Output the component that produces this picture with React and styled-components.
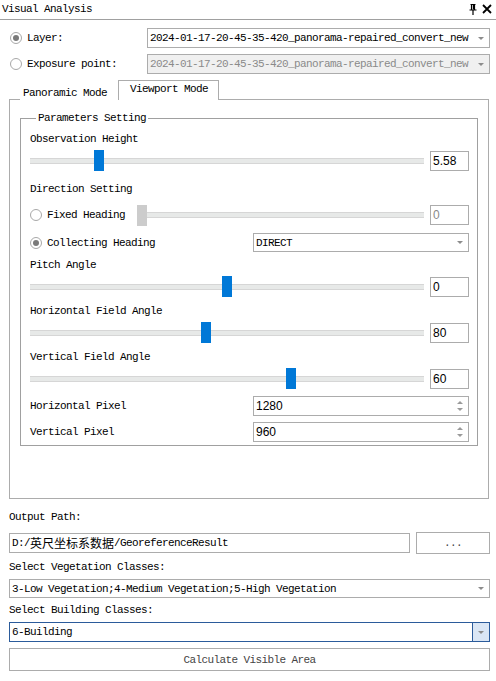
import styled, { createGlobalStyle } from 'styled-components';

const GlobalStyle = createGlobalStyle`
  html, body {
    margin: 0;
    padding: 0;
    background: #ffffff;
  }
  body {
    font-family: "Liberation Mono", "Noto Sans CJK SC", monospace;
    font-size: 11px;
    letter-spacing: -0.6px;
    color: #000;
  }
  * {
    box-sizing: border-box;
  }
`;

const Page = styled.div`
  width: 496px;
  height: 681px;
  overflow: hidden;
`;

const TitleBar = styled.div`
  height: 20px;
  display: flex;
  align-items: center;
  justify-content: space-between;
  padding: 0 4px 1px 2px;
  border-bottom: 1px solid #a0a0a0;
`;

const TitleText = styled.span`
  line-height: 12px;
`;

const TitleIcons = styled.div`
  display: flex;
  align-items: center;
  gap: 5px;
`;

const Body = styled.div`
  padding: 8px 6px 0 9px;
  display: flex;
  flex-direction: column;
`;

const Row = styled.div`
  display: flex;
  align-items: center;
  margin-top: ${({ $mt }) => $mt || 0}px;
  height: ${({ $h }) => $h || 20}px;
`;

const LabelCol = styled.div`
  display: flex;
  align-items: center;
  width: ${({ $w }) => $w}px;
  flex-shrink: 0;
`;

const RadioCircle = styled.span`
  width: 12px;
  height: 12px;
  border-radius: 50%;
  border: 1px solid #a8a8a8;
  background: #fff;
  display: inline-flex;
  align-items: center;
  justify-content: center;
  margin-left: ${({ $ml }) => $ml || 0}px;
  margin-right: 5px;
  flex-shrink: 0;

  &::after {
    content: '';
    width: 6px;
    height: 6px;
    border-radius: 50%;
    background: ${({ $checked }) => ($checked ? '#7a7a7a' : 'transparent')};
  }
`;

const Combo = styled.div`
  flex: 1;
  height: ${({ $h }) => $h || 20}px;
  border: 1px solid ${({ $focused }) => ($focused ? '#2b5b9b' : '#acacac')};
  background: ${({ $disabled }) => ($disabled ? '#f0f0f0' : '#fff')};
  color: ${({ $disabled }) => ($disabled ? '#8a8a8a' : '#000')};
  display: flex;
  align-items: center;
  white-space: nowrap;
  overflow: hidden;
`;

const ComboText = styled.span`
  flex: 1;
  padding-left: 2px;
  overflow: hidden;
`;

const ComboArrow = styled.span`
  width: 17px;
  height: 100%;
  display: flex;
  align-items: center;
  justify-content: center;
  flex-shrink: 0;
  background: ${({ $focused }) => ($focused ? '#dae6f5' : 'transparent')};
  border-left: 1px solid ${({ $focused }) => ($focused ? '#2b5b9b' : 'transparent')};

  &::after {
    content: '';
    border-left: 3px solid transparent;
    border-right: 3px solid transparent;
    border-top: 3px solid #8c8c8c;
  }
`;

const Tabs = styled.div`
  margin-top: 6px;
  margin-bottom: -1px;
  display: flex;
  align-items: flex-end;
  height: 20px;
  padding-left: 11px;
  margin-right: 1px;
`;

const Tab = styled.div`
  height: ${({ $active }) => ($active ? 20 : 16)}px;
  padding: ${({ $active }) => ($active ? '0 10px 4px 11px' : '0 10px 0 2px')};
  display: flex;
  align-items: center;
  background: #fff;
  border: 1px solid ${({ $active }) => ($active ? '#acacac' : 'transparent')};
  border-bottom: none;
  position: relative;
  z-index: 1;
`;

const TabPane = styled.div`
  height: 400px;
  border: 1px solid #acacac;
  margin-right: 1px;
  padding: 18px 10px 0 10px;
`;

const Group = styled.fieldset`
  margin: -6px 0 0 0;
  padding: 5px 8px 3px 9px;
  border: 1px solid #a0a0a0;
  min-width: 0;
  display: flex;
  flex-direction: column;
`;

const Legend = styled.legend`
  padding: 0 2px;
  margin-left: 6px;
  line-height: 12px;
`;

const TextLine = styled.div`
  height: 12px;
  line-height: 12px;
  margin-top: ${({ $mt }) => $mt || 0}px;
  white-space: nowrap;
`;

const SliderTrack = styled.div`
  position: relative;
  height: 21px;
  flex: 1;
  display: flex;
  align-items: center;

  &::before {
    content: '';
    width: 100%;
    height: 4px;
    background: #e7e9e8;
    border-top: 1px solid #d6d6d6;
    border-bottom: 1px solid #d6d6d6;
  }
`;

const Thumb = styled.span`
  position: absolute;
  top: 0;
  width: 10px;
  height: 21px;
  background: ${({ $disabled }) => ($disabled ? '#cccccc' : '#0078d7')};
`;

const ValueBox = styled.div`
  width: 39px;
  height: 20px;
  margin-left: 6px;
  border: 1px solid #acacac;
  font-family: "Liberation Sans", Arial, sans-serif;
  font-size: 12px;
  letter-spacing: 0;
  line-height: 18px;
  padding-left: 2px;
  color: ${({ $disabled }) => ($disabled ? '#8a8a8a' : '#000')};
  flex-shrink: 0;
`;

const SpinBox = styled.div`
  flex: 1;
  height: 20px;
  border: 1px solid #acacac;
  display: flex;
  align-items: center;
  font-family: "Liberation Sans", Arial, sans-serif;
  font-size: 12px;
  letter-spacing: 0;
  padding-left: 2px;
`;

const SpinText = styled.span`
  flex: 1;
`;

const SpinArrows = styled.span`
  width: 17px;
  display: flex;
  flex-direction: column;
  align-items: center;
  gap: 4px;

  &::before,
  &::after {
    content: '';
    border-left: 3px solid transparent;
    border-right: 3px solid transparent;
  }
  &::before {
    border-bottom: 3px solid #9a9a9a;
  }
  &::after {
    border-top: 3px solid #9a9a9a;
  }
`;

const PathInput = styled.div`
  flex: 1;
  height: 20px;
  border: 1px solid #acacac;
  padding-left: 2px;
  display: flex;
  align-items: center;
  white-space: nowrap;
`;

const Cjk = styled.span`
  font-family: "Noto Sans CJK SC", sans-serif;
  font-size: 12px;
  letter-spacing: 0;
  line-height: 12px;
`;

const Button = styled.div`
  width: ${({ $w }) => ($w ? `${$w}px` : 'auto')};
  flex: ${({ $w }) => ($w ? 'none' : 1)};
  height: ${({ $h }) => $h || 23}px;
  margin-left: ${({ $ml }) => $ml || 0}px;
  border: 1px solid #acacac;
  background: #fff;
  color: #444;
  display: flex;
  align-items: center;
  justify-content: center;
`;

const sliders = {
  obs: 64 / 385,
  pitch: 0.5,
  hfa: 80 / 180,
  vfa: 60 / 90,
};

function Slider({ frac, disabled }) {
  return (
    <SliderTrack>
      <Thumb $disabled={disabled} style={{ left: `calc((100% - 10px) * ${frac})` }} />
    </SliderTrack>
  );
}

function PinIcon() {
  return (
    <svg width="8" height="11" viewBox="0 0 8 11">
      <path d="M1.5 0.5h5M2.5 0.5v5M5.5 0.5v5M0.5 6h7M4 6v5" stroke="#000" strokeWidth="1.2" fill="none" />
      <path d="M4.5 1v4.5" stroke="#000" strokeWidth="1.4" />
    </svg>
  );
}

function CloseIcon() {
  return (
    <svg width="10" height="10" viewBox="0 0 10 10">
      <path d="M1 1l8 8M9 1l-8 8" stroke="#000" strokeWidth="1.8" />
    </svg>
  );
}

export default function App() {
  const layerName = '2024-01-17-20-45-35-420_panorama-repaired_convert_new';
  return (
    <Page>
      <GlobalStyle />
      <TitleBar>
        <TitleText>Visual Analysis</TitleText>
        <TitleIcons>
          <PinIcon />
          <CloseIcon />
        </TitleIcons>
      </TitleBar>

      <Body>
        <Row>
          <LabelCol $w={138}>
            <RadioCircle $ml={1} $checked />
            Layer:
          </LabelCol>
          <Combo>
            <ComboText>{layerName}</ComboText>
            <ComboArrow />
          </Combo>
        </Row>
        <Row $mt={6}>
          <LabelCol $w={138}>
            <RadioCircle $ml={1} />
            Exposure point:
          </LabelCol>
          <Combo $disabled>
            <ComboText>{layerName}</ComboText>
            <ComboArrow />
          </Combo>
        </Row>

        <Tabs>
          <Tab>Panoramic Mode</Tab>
          <Tab $active>Viewport Mode</Tab>
        </Tabs>
        <TabPane>
          <Group>
            <Legend>Parameters Setting</Legend>
            <TextLine $mt={4}>Observation Height</TextLine>
            <Row $mt={5} $h={21}>
              <Slider frac={sliders.obs} />
              <ValueBox>5.58</ValueBox>
            </Row>
            <TextLine $mt={12}>Direction Setting</TextLine>
            <Row $mt={10}>
              <LabelCol $w={107}>
                <RadioCircle />
                Fixed Heading
              </LabelCol>
              <Slider frac={0} disabled />
              <ValueBox $disabled>0</ValueBox>
            </Row>
            <Row $mt={8} $h={19}>
              <LabelCol $w={223}>
                <RadioCircle $checked />
                Collecting Heading
              </LabelCol>
              <Combo $h={19}>
                <ComboText>DIRECT</ComboText>
                <ComboArrow />
              </Combo>
            </Row>
            <TextLine $mt={7}>Pitch Angle</TextLine>
            <Row $mt={5} $h={21}>
              <Slider frac={sliders.pitch} />
              <ValueBox>0</ValueBox>
            </Row>
            <TextLine $mt={8}>Horizontal Field Angle</TextLine>
            <Row $mt={5} $h={21}>
              <Slider frac={sliders.hfa} />
              <ValueBox>80</ValueBox>
            </Row>
            <TextLine $mt={8}>Vertical Field Angle</TextLine>
            <Row $mt={5} $h={21}>
              <Slider frac={sliders.vfa} />
              <ValueBox>60</ValueBox>
            </Row>
            <Row $mt={7}>
              <LabelCol $w={223}>Horizontal Pixel</LabelCol>
              <SpinBox>
                <SpinText>1280</SpinText>
                <SpinArrows />
              </SpinBox>
            </Row>
            <Row $mt={6}>
              <LabelCol $w={223}>Vertical Pixel</LabelCol>
              <SpinBox>
                <SpinText>960</SpinText>
                <SpinArrows />
              </SpinBox>
            </Row>
          </Group>
        </TabPane>

        <TextLine $mt={12}>Output Path:</TextLine>
        <Row $mt={9} $h={22}>
          <PathInput>
            D:/<Cjk>英尺坐标系数据</Cjk>/GeoreferenceResult
          </PathInput>
          <Button $w={74} $h={22} $ml={6}>...</Button>
        </Row>
        <TextLine $mt={7}>Select Vegetation Classes:</TextLine>
        <Row $mt={6} $h={19}>
          <Combo $h={19}>
            <ComboText>3-Low Vegetation;4-Medium Vegetation;5-High Vegetation</ComboText>
            <ComboArrow />
          </Combo>
        </Row>
        <TextLine $mt={6}>Select Building Classes:</TextLine>
        <Row $mt={6} $h={20}>
          <Combo $focused>
            <ComboText>6-Building</ComboText>
            <ComboArrow $focused />
          </Combo>
        </Row>
        <Row $mt={6} $h={23}>
          <Button>Calculate Visible Area</Button>
        </Row>
      </Body>
    </Page>
  );
}
